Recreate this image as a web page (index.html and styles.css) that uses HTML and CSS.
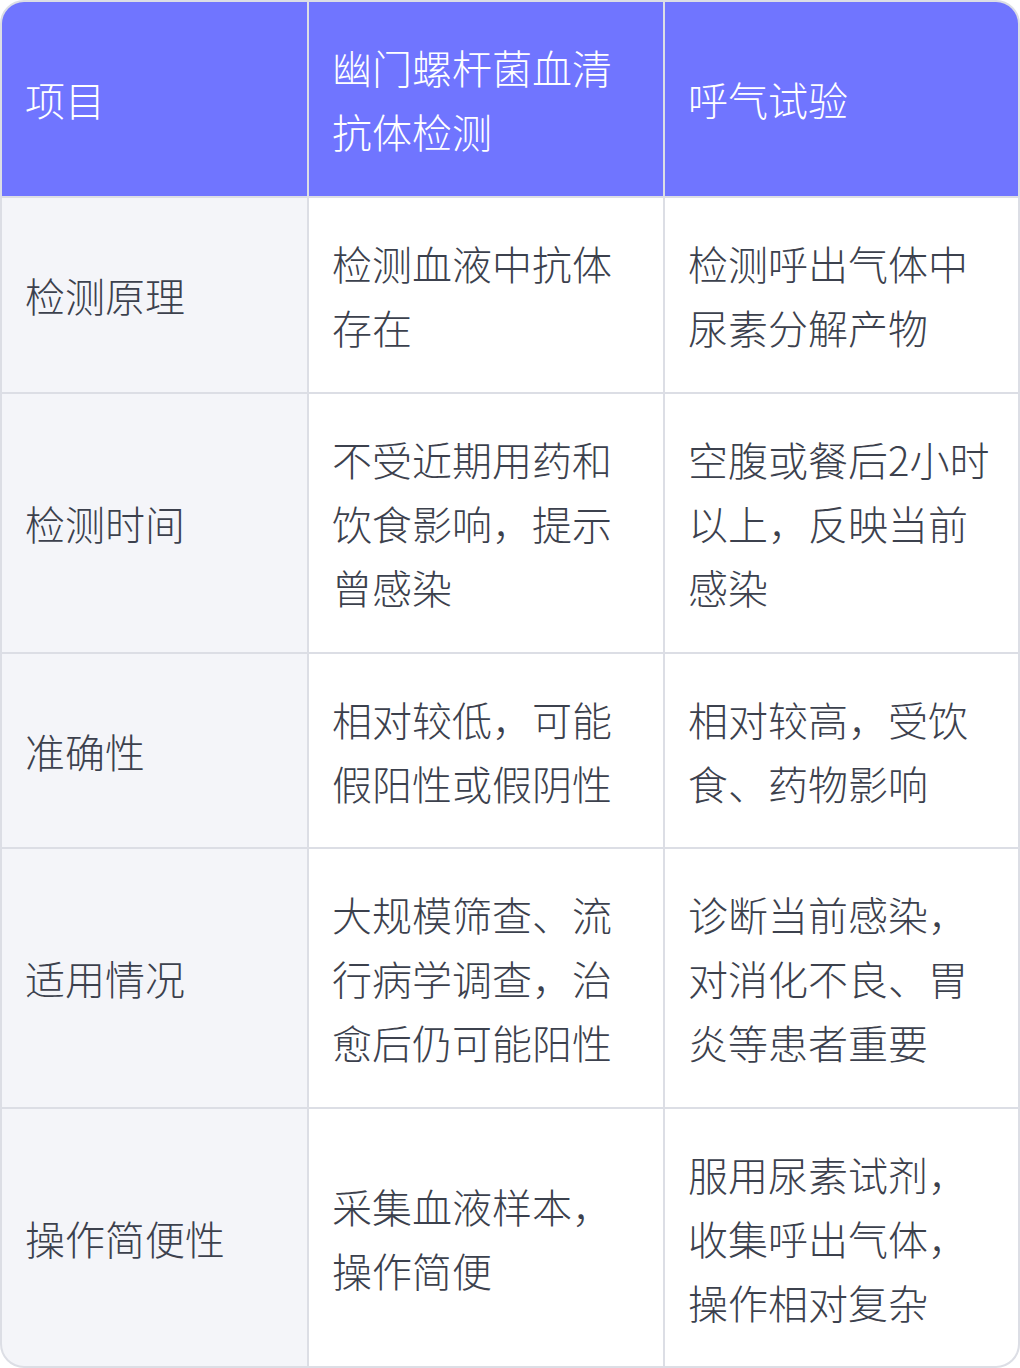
FILE: index.html
```html
<!DOCTYPE html>
<html lang="zh-CN">
<head>
<meta charset="utf-8">
<link rel="stylesheet" href="styles.css">
</head>
<body>
<div class="table">
  <div class="cell head">项目</div>
  <div class="cell head">幽门螺杆菌血清抗体检测</div>
  <div class="cell head">呼气试验</div>

  <div class="cell label">检测原理</div>
  <div class="cell">检测血液中抗体存在</div>
  <div class="cell">检测呼出气体中尿素分解产物</div>

  <div class="cell label">检测时间</div>
  <div class="cell">不受近期用药和饮食影响，提示曾感染</div>
  <div class="cell">空腹或餐后2小时以上，反映当前感染</div>

  <div class="cell label">准确性</div>
  <div class="cell">相对较低，可能假阳性或假阴性</div>
  <div class="cell">相对较高，受饮食、药物影响</div>

  <div class="cell label">适用情况</div>
  <div class="cell">大规模筛查、流行病学调查，治愈后仍可能阳性</div>
  <div class="cell">诊断当前感染，对消化不良、胃炎等患者重要</div>

  <div class="cell label">操作简便性</div>
  <div class="cell">采集血液样本，操作简便</div>
  <div class="cell">服用尿素试剂，收集呼出气体，操作相对复杂</div>
</div>
</body>
</html>
```

FILE: styles.css
```css
html, body {
  margin: 0;
  padding: 0;
  background: #ffffff;
}

.table {
  width: 1020px;
  height: 1368px;
  box-sizing: border-box;
  border: 2px solid #dcdee5;
  border-radius: 24px;
  overflow: hidden;
  display: grid;
  grid-template-columns: 305px 354px 353px;
  grid-template-rows: 194px 194px 258px 193px 258px 1fr;
  gap: 2px;
  background: #dcdee5;
  font-family: "Noto Sans CJK SC", "Noto Sans", sans-serif;
  font-weight: 300;
  font-size: 40px;
  line-height: 64px;
  color: #3c414d;
}

.cell {
  background: #ffffff;
  padding: 0 24px 0 23px;
  display: flex;
  align-items: center;
}

.head {
  background: #7075ff;
  color: #ffffff;
}

.label {
  background: #f4f5f9;
}
```
